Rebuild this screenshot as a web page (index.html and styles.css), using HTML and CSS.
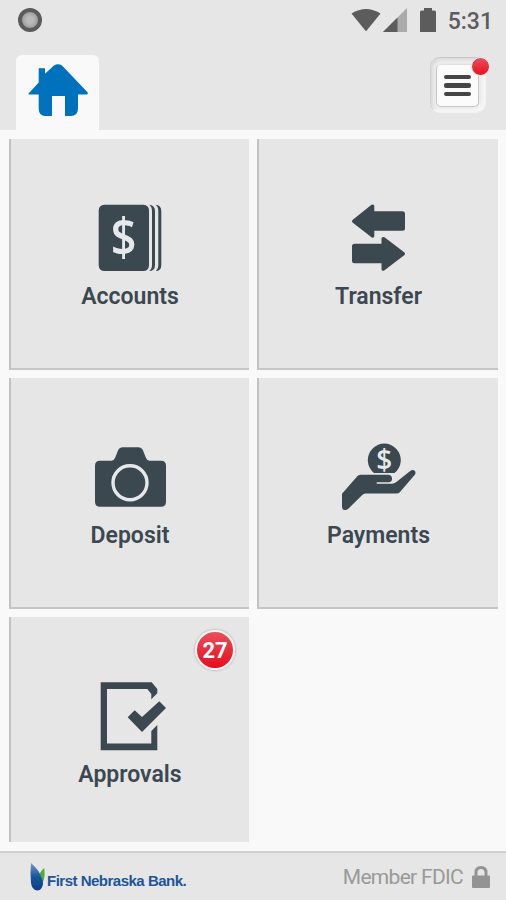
FILE: index.html
```
<!DOCTYPE html>
<html lang="en">
<head>
    <meta charset="UTF-8">
    <title>First Nebraska Bank</title>
    <link rel="stylesheet" href="styles.css">
</head>
<body>

<header>
    <div class="status-bar">
        <span class="record-dot"></span>
        <div class="status-icons">
            <svg class="wifi" width="30" height="24" viewBox="0 0 30 24"><path d="M.5 5.600Q15 -3.500 29.500 5.600L15.500 22.800Q15 23.300 14.500 22.800Z" fill="#5c5c5c"/></svg>
            <svg class="signal" width="24" height="24" viewBox="0 0 24 24"><path d="M24 0V24H0Z" fill="#ababab"/><path d="M14.500 9.500V24H0Z" fill="#5c5c5c"/></svg>
            <svg class="battery" width="16" height="24" viewBox="0 0 16 24"><path d="M1.500 2.500H4V0H12V2.500H14.500Q16 2.500 16 4V24H0V4Q0 2.500 1.500 2.500Z" fill="#5c5c5c"/></svg>
            <span class="time">5:31</span>
        </div>
    </div>
    <div class="nav">
        <a class="home-tab" href="#">
            <svg width="60" height="52" viewBox="0 0 60 52"><path d="M.6 29.500L10.700 18.500V4.200H17V9.700L26 1.500Q30 -1.200 34 1.500L59.500 28.200Q60.500 30.300 58.500 30.600H50V45Q49.500 52 43 52H37V32H24V52H17Q11 51.500 10.700 45V30.600H2Q0 30.600 .6 29.500Z" fill="#0071bc"/></svg>
        </a>
        <button class="menu-button">
            <span class="menu-inner">
                <span class="bar"></span>
                <span class="bar"></span>
                <span class="bar"></span>
            </span>
            <span class="alert-dot"></span>
        </button>
    </div>
</header>

<main class="tiles">
    <a class="tile" href="#">
        <svg class="icon" width="80" height="72" viewBox="0 0 80 72">
            <rect x="8.700" y="1.700" width="50.300" height="66.300" rx="5.500"/>
            <path d="M59 1.700Q65 2 65 8V62Q65 68 59 68Q62 66 62 62V8Q62 3.500 59 1.700Z"/>
            <path d="M65.500 1.700Q71.300 2 71.300 8V62Q71.300 68 65.500 68Q68.300 66 68.300 62V8Q68.300 3.500 65.500 1.700Z"/>
            <text class="dollar" x="0" y="0" font-size="49" transform="translate(33.700 52.500) scale(.92 1.060)">$</text>
        </svg>
        <span class="label">Accounts</span>
    </a>
    <a class="tile" href="#">
        <svg class="icon" width="80" height="72" viewBox="1 0 80 72">
            <path d="M14.500 17L33.500 1.800Q36 .8 36.300 3V8.300H64.500Q67 8.300 67 10.800V25.200Q67 27.700 64.500 27.700H36.300V33Q36 35.700 33.500 34.200L14.500 19.500Q13.300 18.300 14.500 17Z"/>
            <path d="M66.500 49.500L46.500 34.300Q43.800 33.300 43.500 35.500V40.700H16.500Q14 40.700 14 43.200V57.800Q14 60.300 16.500 60.300H43.500V66.300Q43.800 68.700 46.500 67.200L66.500 52Q67.700 50.800 66.500 49.500Z"/>
        </svg>
        <span class="label">Transfer</span>
    </a>
    <a class="tile" href="#">
        <svg class="icon" width="80" height="72" viewBox="0 0 80 72">
            <path d="M10 18.700H21.500Q24 18.500 25 16L28 8.500Q29.500 5.300 33 5.300H48Q51.500 5.300 53 8.500L56 16Q57 18.500 59.500 18.700H71Q76 18.700 76 23.700V59.700Q76 64.700 71 64.700H10Q5 64.700 5 59.700V23.700Q5 18.700 10 18.700Z"/>
            <circle class="lens" cx="40" cy="40.700" r="17"/>
        </svg>
        <span class="label">Deposit</span>
    </a>
    <a class="tile" href="#">
        <svg class="icon" width="80" height="72" viewBox="1 0 80 72">
            <path d="M36 31A16.500 16.500 0 1 1 56.600 31Z"/>
            <text class="dollar" x="46.300" y="28" font-size="28">$</text>
            <path d="M4 51.800L19.500 34Q21 32.700 23 32.700H50.500Q54.300 33.500 54 37Q53.800 40.300 50.500 40.300H38.700V41.700H54Q57 41.300 59 39.500L72.500 28.800Q75 27.200 76.700 28.800Q78.300 30.500 76.800 32.700L62 50Q60.700 51.500 58.500 51.500H27.500Q25.500 51.700 24 53.200L10 67Q8.300 68.300 6.500 68Q4 67.700 4 65Z"/>
        </svg>
        <span class="label">Payments</span>
    </a>
    <a class="tile last" href="#">
        <span class="badge">27</span>
        <svg class="icon" width="80" height="72" viewBox="0 0 80 72">
            <path d="M10.700 1.300H61.700L67.300 8V12.300L61.300 18.300V13L57.300 8H17V62.500H61.300V50L67.300 44V69.300H10.700Z"/>
            <path d="M37.700 36.300L44.700 29.300L52 36L69.300 20.300L76 27L52 51Z"/>
        </svg>
        <span class="label">Approvals</span>
    </a>
</main>

<footer>
    <div class="bank">
        <svg width="16" height="28" viewBox="0 0 16 28">
            <defs>
                <linearGradient id="leaf" x1="0" y1="0" x2="0" y2="1">
                    <stop offset="0" stop-color="#7898c4"/>
                    <stop offset=".5" stop-color="#17569c"/>
                    <stop offset="1" stop-color="#0b3f86"/>
                </linearGradient>
            </defs>
            <path d="M14.300 5Q15.500 12 13.500 18Q11 20 8.500 16Q9 9 14.300 5Z" fill="#4fae3c"/>
            <path d="M1 0Q10 8 11 14Q14 18 12.500 23Q11 27.500 7 27.500Q2 27 1 20Q0 10 1 0Z" fill="url(#leaf)"/>
        </svg>
        <span class="bank-name">First Nebraska Bank.</span>
    </div>
    <div class="member">
        <span>Member FDIC</span>
        <svg width="18" height="22" viewBox="0 0 18 22"><path d="M4 10V6.500Q4 1.500 9 1.500Q14 1.500 14 6.500V10" fill="none" stroke="#939393" stroke-width="3"/><rect x="0" y="9.500" width="18" height="12.500" rx="1" fill="#939393"/></svg>
    </div>
</footer>

</body>
</html>
```

FILE: styles.css
```
* {
    box-sizing: border-box;
}
body {
    margin: 0;
    width: 506px;
    height: 900px;
    display: flex;
    flex-direction: column;
    font-family: Roboto, sans-serif;
    background-color: #f9f9f9;
    overflow: hidden;
}
header {
    height: 130px;
    background-color: #e6e6e6;
}
a {
    color: inherit;
    text-decoration: none;
}
svg {
    display: block;
}
.status-bar {
    height: 55px;
    padding: 8px 13px 0 18px;
    display: flex;
    justify-content: space-between;
}
.record-dot {
    width: 24px;
    height: 24px;
    border: 4px solid #5b5b5b;
    border-radius: 50%;
    background: radial-gradient(circle, #bababa 30%, #999999 75%);
}
.status-icons {
    display: flex;
    height: 24px;
}
.signal {
    margin-left: 2px;
}
.battery {
    margin-left: 13px;
}
.time {
    margin-left: 12px;
    font-size: 23px;
    line-height: 27px;
    color: #5c5c5c;
    font-weight: 500;
}
.nav {
    height: 75px;
    padding: 0 20px 0 16px;
    display: flex;
    justify-content: space-between;
}
.home-tab {
    width: 83px;
    height: 75px;
    padding: 9px 0 0 12px;
    background-color: #f9f9f9;
    border-radius: 6px 6px 0 0;
}
.menu-button {
    position: relative;
    width: 56px;
    height: 56px;
    margin-top: 2px;
    padding: 6px 5px;
    border: 1px solid #f3f3f3;
    border-top-color: #c8c8c8;
    border-left-color: #d0d0d0;
    border-radius: 10px;
    background-color: #ebebeb;
    box-shadow: inset -3px -3px 3px #f6f6f6, inset 2px 2px 2px #dddddd;
}
.menu-inner {
    width: 43px;
    height: 43px;
    display: flex;
    flex-direction: column;
    align-items: center;
    justify-content: center;
    gap: 4px;
    background-color: #fbfbfb;
    border: 1px solid #c6c6c6;
    border-top-color: #e0e0e0;
    border-radius: 5px;
}
.bar {
    width: 27px;
    height: 4.500px;
    border-radius: 2px;
    background-color: #454545;
}
.alert-dot {
    position: absolute;
    top: -1px;
    right: -5px;
    width: 19px;
    height: 19px;
    border: 1.500px solid #f6e9ea;
    border-radius: 50%;
    background: linear-gradient(#e8505c, #e8101f);
}
.tiles {
    height: 721px;
    padding: 9px 8px 9px 9px;
    display: grid;
    grid-template-columns: 240px 241px;
    grid-template-rows: 231px 231px 225px;
    gap: 8px;
}
.tile {
    position: relative;
    display: flex;
    flex-direction: column;
    align-items: center;
    padding-top: 64px;
    background-color: #e6e6e6;
    border-left: 2px solid #c2c2c2;
    border-bottom: 2px solid #c5c5c5;
}
.tile.last {
    border-bottom: none;
}
.icon {
    fill: #3b4850;
}
.icon .dollar {
    fill: #e6e9eb;
    font-family: "Open Sans", sans-serif;
    font-weight: 600;
    text-anchor: middle;
}
.lens {
    fill: none;
    stroke: #e6e9eb;
    stroke-width: 3.400px;
}
.label {
    margin-top: 8px;
    font-size: 23px;
    line-height: 27px;
    font-weight: 600;
    color: #3b4850;
}
.badge {
    position: absolute;
    top: 13px;
    right: 14px;
    width: 40px;
    height: 40px;
    border: 2px solid #faf3f3;
    border-radius: 50%;
    background: linear-gradient(#e8505c, #e80c1b);
    box-shadow: 0 0 2px 1px #c4c4c4;
    color: white;
    font-size: 22px;
    line-height: 37px;
    font-weight: 700;
    text-align: center;
}
footer {
    height: 49px;
    padding: 0 16px 0 30px;
    display: flex;
    justify-content: space-between;
    align-items: center;
    background-color: #e6e6e6;
    border-top: 2px solid #cfcfcf;
}
.bank {
    display: flex;
    align-items: center;
}
.bank-name {
    margin-top: 8px;
    margin-left: 1px;
    font-family: "Liberation Sans", Arial, sans-serif;
    font-size: 15px;
    font-weight: 700;
    letter-spacing: -0.500px;
    color: #1d5596;
}
.member {
    display: flex;
    align-items: center;
    gap: 9px;
    font-size: 21px;
    letter-spacing: -0.700px;
    color: #999999;
}
```
